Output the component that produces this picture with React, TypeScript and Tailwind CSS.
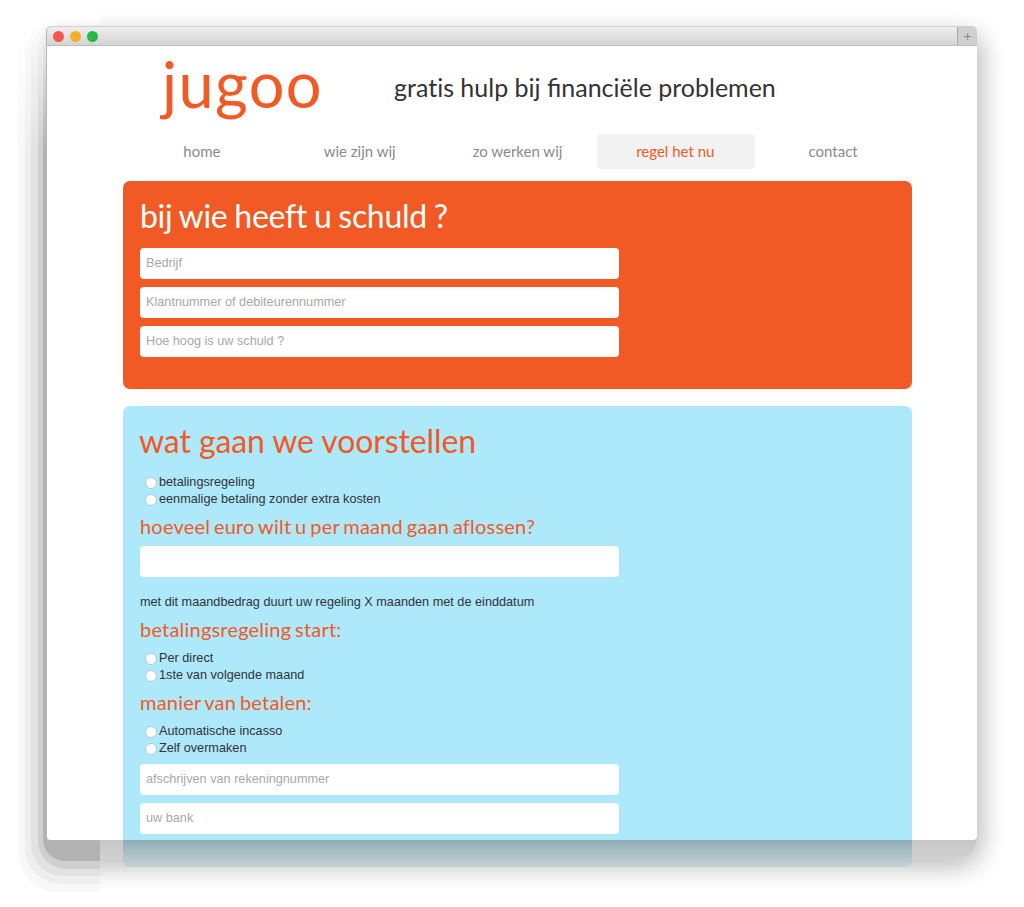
const navItems = ['home', 'wie zijn wij', 'zo werken wij', 'regel het nu', 'contact'];

function Field({ placeholder, className = 'mb-[8px]' }: { placeholder?: string; className?: string }) {
  return (
    <input
      placeholder={placeholder}
      className={`block h-[31px] w-[479px] rounded-[4px] bg-white px-[6px] pb-[1px] font-['Liberation_Sans',sans-serif] text-[12.7px] outline-none placeholder:text-[#a8a8a8] ${className}`}
    />
  );
}

function Radio({ label, name }: { label: string; name: string }) {
  return (
    <label className="flex h-[17px] items-center pl-[5px] font-['Liberation_Sans',sans-serif] text-[12.7px] text-[#333]">
      <input
        type="radio"
        name={name}
        className="mr-[2px] mt-[1px] h-[12px] w-[12px] appearance-none rounded-full border border-[#b4c8d0] bg-white"
      />
      {label}
    </label>
  );
}

function SubHeading({ children }: { children: string }) {
  return <h3 className="text-[20px] leading-[24px] tracking-[0.2px] text-[#f15a24] [word-spacing:-1.5px]">{children}</h3>;
}

export default function App() {
  return (
    <div className="relative h-[907px] w-[1024px] overflow-hidden bg-white pl-[46px] pt-[26px] font-['Lato',sans-serif]">
      {/* soft drop shadow right and below */}
      <div className="absolute left-[60px] top-[38px] h-[822px] w-[917px] rounded-b-[22px] rounded-t-[10px] bg-gradient-to-b from-[#c4c4c4] from-[97%] to-[#d2d2d2] shadow-[0_2px_24px_6px_rgba(0,0,0,0.26)]" />

      {/* stepped shadow on the left, cut off at x=100 */}
      <div className="absolute left-0 top-0 z-[1] h-full w-[100px] overflow-hidden bg-white">
        <div className="absolute left-[18px] top-[14px] h-[878px] w-[300px] rounded-[40px] bg-gradient-to-b from-[#ffffff] to-[#f8f8f8] to-[15%]" />
        <div className="absolute left-[25px] top-[18px] h-[866px] w-[300px] rounded-[36px] bg-gradient-to-b from-[#fdfdfd] to-[#eeeeee] to-[15%]" />
        <div className="absolute left-[31px] top-[20px] h-[856px] w-[300px] rounded-[32px] bg-gradient-to-b from-[#fbfbfb] to-[#e2e2e2] to-[15%]" />
        <div className="absolute left-[38px] top-[22px] h-[847px] w-[300px] rounded-[28px] bg-gradient-to-b from-[#f8f8f8] to-[#cfcfcf] to-[15%]" />
        <div className="absolute left-[43px] top-[24px] h-[837px] w-[300px] rounded-[22px] bg-gradient-to-b from-[#f4f4f4] to-[#b2b2b2] to-[15%]" />
      </div>

      {/* window */}
      <div className="relative z-10 flex h-[814px] w-[931px] flex-col rounded-t-[5px] rounded-b-[4px] border-l border-[#b5b5b5] bg-white">
        <div className="flex h-[20px] shrink-0 items-center rounded-t-[5px] border-b border-t border-b-[#bdbdbd] border-t-[#d0d0d0] bg-gradient-to-b from-[#eeeeee] to-[#d4d4d4] pl-[6px]">
          <span className="mr-[6px] h-[11px] w-[11px] rounded-full bg-[#f2564e]" />
          <span className="mr-[6px] h-[11px] w-[11px] rounded-full bg-[#f5ad2e]" />
          <span className="h-[11px] w-[11px] rounded-full bg-[#27b845]" />
          <span className="ml-auto flex h-[18px] w-[20px] items-center justify-center rounded-tr-[5px] border-l border-[#aaaaaa] bg-[#cfcfcf] text-[14px] leading-none text-[#888]">
            +
          </span>
        </div>

        <div className="flex-1 overflow-hidden rounded-b-[4px] pl-[76px]">
          <header className="flex h-[88px] items-center">
            <div className="mb-[12px] ml-[39px] w-[232px] text-[63px] leading-[76px] tracking-[1.4px] text-[#f15a24]">jugoo</div>
            <div className="mb-[4px] text-[25px] text-[#333]">
              <span className="[font-variant-ligatures:none]">gratis hulp bij </span>financiële problemen
            </div>
          </header>

          <nav className="flex h-[35px] w-[790px] pl-[1px] text-[15px] text-[#8a8a8a]">
            {navItems.map((item) => (
              <a
                key={item}
                className={
                  item === 'regel het nu'
                    ? 'flex w-[158px] items-center justify-center rounded-[4px] bg-[#f2f2f2] pr-[2px] text-[#f15a24]'
                    : 'flex w-[158px] items-center justify-center pr-[2px]'
                }
              >
                {item}
              </a>
            ))}
          </nav>

          <section className="mt-[12px] h-[208px] w-[789px] rounded-[7px] bg-[#f15a24] px-[17px] pt-[15px]">
            <h2 className="mb-[12px] text-[32px] leading-[40px] tracking-[-0.3px] text-white [font-variant-ligatures:none] [word-spacing:-1px]">bij wie heeft u schuld ?</h2>
            <Field placeholder="Bedrijf" />
            <Field placeholder="Klantnummer of debiteurennummer" />
            <Field placeholder="Hoe hoog is uw schuld ?" />
          </section>

          <section className="mt-[17px] h-[460px] w-[789px] rounded-[7px] bg-[#ade8fb] px-[17px] pt-[15px]">
            <h2 className="mb-[13px] ml-[-1px] text-[32px] leading-[40px] tracking-[-0.1px] text-[#f15a24]">wat gaan we voorstellen</h2>
            <Radio name="soort" label="betalingsregeling" />
            <Radio name="soort" label="eenmalige betaling zonder extra kosten" />
            <div className="mt-[6px]">
              <SubHeading>hoeveel euro wilt u per maand gaan aflossen?</SubHeading>
            </div>
            <Field className="mt-[8px]" />
            <p className="mt-[18px] font-['Liberation_Sans',sans-serif] text-[12.7px] leading-[15px] text-[#333]">
              met dit maandbedrag duurt uw regeling X maanden met de einddatum
            </p>
            <div className="mb-[9px] mt-[7px]">
              <SubHeading>betalingsregeling start:</SubHeading>
            </div>
            <Radio name="start" label="Per direct" />
            <Radio name="start" label="1ste van volgende maand" />
            <div className="mb-[9px] mt-[6px]">
              <SubHeading>manier van betalen:</SubHeading>
            </div>
            <Radio name="manier" label="Automatische incasso" />
            <Radio name="manier" label="Zelf overmaken" />
            <Field className="mb-[8px] mt-[7px]" placeholder="afschrijven van rekeningnummer" />
            <Field placeholder="uw bank" />
          </section>
        </div>
      </div>

      {/* panel running on below the window edge */}
      <div className="absolute left-[123px] top-[840px] z-[2] h-[27px] w-[789px] rounded-b-[6px] bg-gradient-to-b from-[#8fadb6] to-[#c6d2d5]" />
    </div>
  );
}
